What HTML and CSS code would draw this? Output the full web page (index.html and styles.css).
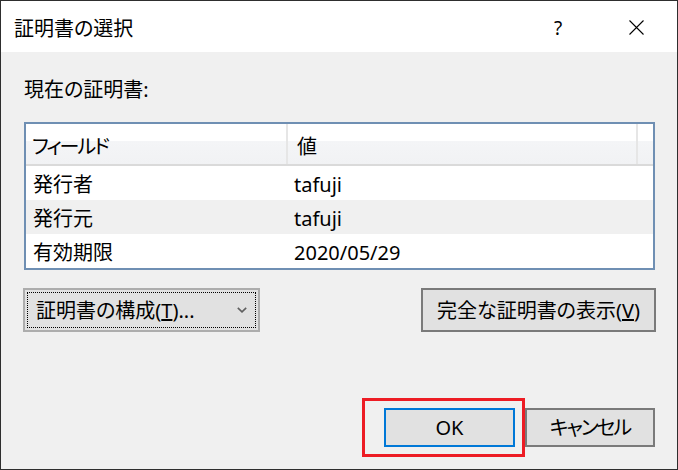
FILE: index.html
```html
<!DOCTYPE html>
<html lang="ja">
<head>
<meta charset="utf-8">
<title>証明書の選択</title>
<link rel="stylesheet" href="styles.css">
</head>
<body>
<div class="window">
  <div class="titlebar">
    <span class="title">証明書の選択</span>
    <span class="help">?</span>
    <span class="close">
      <svg width="15" height="15" viewBox="0 0 15 15"><path d="M0.5 0.5 L14.5 14.5 M14.5 0.5 L0.5 14.5" stroke="#000" stroke-width="1.1" fill="none"/></svg>
    </span>
  </div>
  <div class="content">
    <div class="label">現在の証明書:</div>
    <div class="list">
      <div class="list-head">
        <div class="head-field"><span class="kana">フィールド</span></div>
        <div class="head-value">値</div>
        <div class="head-rest"></div>
      </div>
      <div class="row">
        <div class="cell-field">発行者</div>
        <div class="cell-value">tafuji</div>
      </div>
      <div class="row alt">
        <div class="cell-field">発行元</div>
        <div class="cell-value">tafuji</div>
      </div>
      <div class="row">
        <div class="cell-field">有効期限</div>
        <div class="cell-value">2020/05/29</div>
      </div>
    </div>
    <div class="actions">
      <button class="btn btn-dropdown"><span class="focus"><span>証明書の構成(<u>T</u>)...</span><svg class="chevron" width="10" height="6" viewBox="0 0 10 6"><path d="M0.8 0.8 L5 4.8 L9.2 0.8" stroke="#5f5f5f" stroke-width="1.6" fill="none"/></svg></span></button>
      <button class="btn btn-view">完全な証明書の表示(<u>V</u>)</button>
    </div>
    <div class="footer">
      <div class="ok-wrap">
        <button class="btn btn-ok">OK</button>
        <span class="highlight"></span>
      </div>
      <button class="btn btn-cancel"><span class="kana">キャンセル</span></button>
    </div>
  </div>
</div>
</body>
</html>
```

FILE: styles.css
```css
html, body {
  margin: 0;
  padding: 0;
}

body {
  width: 678px;
  height: 470px;
  font-family: "Noto Sans", "Noto Sans CJK JP", sans-serif;
  font-size: 20px;
  font-feature-settings: "palt";
  color: #000;
  overflow: hidden;
}

.window {
  width: 678px;
  height: 470px;
  box-sizing: border-box;
  border: 1px solid #2e2e2e;
  background: #f0f0f0;
  display: flex;
  flex-direction: column;
}

.titlebar {
  height: 51px;
  background: #fff;
  display: flex;
  align-items: center;
  padding: 0 18px 0 13px;
  flex-shrink: 0;
}

.title {
  flex: 1;
  line-height: 24px;
  padding-top: 4px;
}

.help {
  width: 30px;
  text-align: center;
  line-height: 24px;
  font-size: 19px;
  margin-right: 40px;
  padding-top: 2px;
}

.close {
  width: 46px;
  display: flex;
  justify-content: center;
  align-items: center;
  padding-top: 1px;
}

.content {
  flex: 1;
  display: flex;
  flex-direction: column;
  padding: 26px 21px 22px 22px;
}

.label {
  line-height: 24px;
  padding-left: 1px;
}

.kana {
  letter-spacing: -2px;
}

.list {
  margin: 20px 1px 0 1px;
  border: 2px solid #6f8fb3;
  background: #fff;
}

.list-head {
  display: flex;
  height: 40px;
  border-bottom: 2px solid #dadada;
  background: linear-gradient(to bottom, #fff 0, #fff 17px, #f4f5f7 17px, #f1f2f4 100%);
}

.head-field,
.head-value {
  display: flex;
  align-items: center;
  padding-top: 6px;
  box-sizing: border-box;
  border-right: 2px solid #e6e6e6;
  line-height: 24px;
}

.head-field {
  width: 262px;
  padding-left: 6px;
}

.head-value {
  width: 350px;
  padding-left: 9px;
}

.head-rest {
  flex: 1;
}

.row {
  display: flex;
  align-items: center;
  height: 34px;
  line-height: 24px;
  padding-top: 3px;
  box-sizing: border-box;
}

.row.alt {
  background: #f0f0f0;
}

.cell-field {
  width: 261px;
  padding-left: 7px;
  box-sizing: border-box;
}

.cell-value {
  padding-left: 7px;
}

.actions {
  margin-top: 18px;
  display: flex;
  justify-content: space-between;
}

.btn {
  font: inherit;
  font-feature-settings: "palt";
  color: #000;
  margin: 0;
  padding: 0;
  box-sizing: border-box;
  background: #e1e1e1;
  border: 2px solid #7a7a7a;
  line-height: 24px;
}

.btn-dropdown {
  width: 237px;
  height: 44px;
  border-color: #adadad;
  padding: 2px;
  display: flex;
}

.focus {
  flex: 1;
  display: flex;
  align-items: center;
  justify-content: space-between;
  border: 1px dotted #000;
  padding: 1px 8px 0 8px;
}

.chevron {
  display: block;
  margin-top: -2px;
}

.btn-view {
  width: 235px;
  height: 44px;
  padding-top: 1px;
}

.footer {
  margin-top: auto;
  margin-right: 1px;
  display: flex;
  justify-content: flex-end;
  gap: 10px;
}

.ok-wrap {
  position: relative;
}

.btn-ok {
  width: 131px;
  height: 39px;
  border-color: #0078d7;
  padding-top: 1px;
}

.highlight {
  position: absolute;
  left: -22px;
  top: -10px;
  width: 163px;
  height: 59px;
  box-sizing: border-box;
  border: 3px solid #ed1c24;
}

.btn-cancel {
  width: 130px;
  height: 39px;
  padding-top: 1px;
}
```
